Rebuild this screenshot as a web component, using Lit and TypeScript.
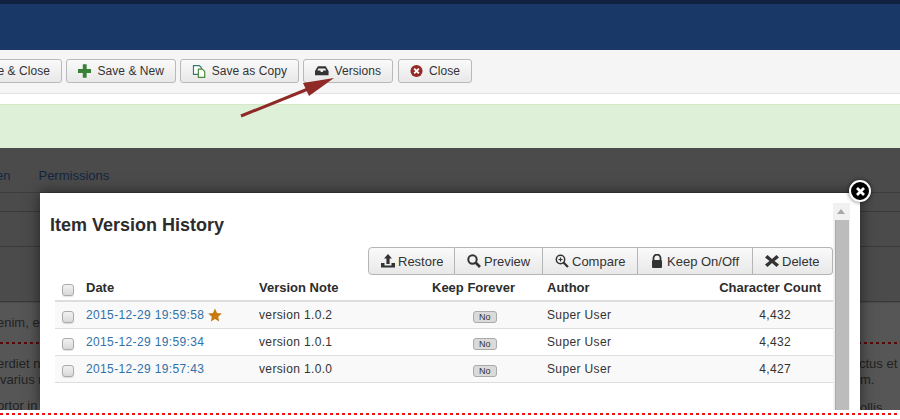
import { LitElement, html, css, svg } from "lit";
import { customElement } from "lit/decorators.js";

const rows = [
  { d: "2015-12-29 19:59:58", n: "version 1.0.2", c: "4,432", star: true },
  { d: "2015-12-29 19:59:34", n: "version 1.0.1", c: "4,432", star: false },
  { d: "2015-12-29 19:57:43", n: "version 1.0.0", c: "4,427", star: false },
];

const ic = {
  plus: svg`<path d="M5 0h4v5h5v4H9v5H5V9H0V5h5z" fill="#378137"/>`,
  copy: svg`<path d="M1.500 1.500h6l2 2v7h-8z" fill="#fff" stroke="#2f7d6b" stroke-width="1.200"/><path d="M6.500 5h4l2.500 2.500v6H6.500z" fill="#fff" stroke="#4a8a3a" stroke-width="1.200"/>`,
  versions: svg`<path d="M3 2h8l3 5v4.500H0V7z" fill="#333"/><path d="M3.500 4.500h7l1 2h-3L8 8H6L5.500 6.500h-3z" fill="#f0f0f0"/>`,
  close: svg`<circle cx="7" cy="7" r="6.500" fill="#942a25"/><path d="M4.500 4.500l5 5m0-5l-5 5" stroke="#fff" stroke-width="2"/>`,
  restore: svg`<path d="M7 0l4 4.500H8.600V10H5.400V4.500H3z" fill="#333"/><path d="M0 9h3.500v2.500h7V9H14v4.500H0z" fill="#333"/>`,
  search: svg`<circle cx="5.500" cy="5.500" r="4.200" fill="none" stroke="#333" stroke-width="2"/><path d="M8.500 8.500l4.500 4.500" stroke="#333" stroke-width="2.600"/>`,
  zoom: svg`<circle cx="5.500" cy="5.500" r="4.200" fill="none" stroke="#333" stroke-width="1.500"/><path d="M8.500 8.500l4.500 4.500" stroke="#333" stroke-width="2.200"/><path d="M3.500 5.500h4M5.500 3.500v4" stroke="#333" stroke-width="1.200"/>`,
  lock: svg`<path d="M3.500 6V4a3.500 3.500 0 0 1 7 0v2" fill="none" stroke="#333" stroke-width="1.800"/><rect x="2" y="6" width="10" height="8" rx="1" fill="#333"/>`,
  del: svg`<path d="M2.500 1L7 5 11.500 1 14 3.500 9.500 7 14 10.500 11.500 13 7 9 2.500 13 0 10.500 4.500 7 0 3.500z" fill="#333"/>`,
};

const icon = (p: unknown) => html`<svg class="ic" viewBox="0 0 14 14" width="14" height="14">${p}</svg>`;

@customElement("app-root")
export class AppRoot extends LitElement {
  static styles = css`
    :host { display: block; width: 900px; height: 419px; overflow: hidden; position: relative; background: #fff;
      font-family: "Liberation Sans", Arial, sans-serif; font-size: 12px; color: #333; }
    .top { height: 46px; background: #1a3867; border-top: 4px solid #10223f; }
    .toolbar { background: #f5f5f5; border-bottom: 1px solid #e3e3e3; display: flex; gap: 4px;
      padding: 9px 428px 0 0; height: 34px; justify-content: flex-end; }
    .tb { height: 24px; box-sizing: border-box; border: 1px solid #b9b9b9; border-radius: 3px; display: flex; align-items: center;
      background: linear-gradient(#fafafa, #e8e8e8); color: #333; padding: 0 11px; gap: 6px; white-space: nowrap; letter-spacing: .05px; flex: none; }
    .tb.w1 { width: 110px; }
    .tb.w2 { width: 119px; }
    .tb.w3 { width: 90px; margin-right: 1px; }
    .tb.w4 { width: 74px; }
    .gap { height: 10px; }
    .green { height: 44px; background: #dff0d8; border-top: 1px solid #d6e9c6; box-sizing: border-box; }
    .back { height: 262px; background: linear-gradient(#4b4b4b 0 155px, #565656 155px); color: #222; position: relative; font-size: 13px; overflow: hidden; }
    .tabs { height: 45px; border-bottom: 1px solid #3d3d3d; display: flex; gap: 28px; align-items: center; font-size: 13px; margin-left: -4px; color: #14263f; box-sizing: border-box; padding-top: 10px; }
    .rule { height: 18px; border-bottom: 1px solid #3a3a3a; }
    .rule.b { height: 34px; }
    .rule.c { height: 54px; }
    .bl { position: absolute; white-space: nowrap; }
    .dots { position: absolute; height: 2px; left: 0; width: 900px; top: 194px;
      background: repeating-linear-gradient(90deg, #5a0707 0 3px, transparent 3px 6px); }
    .foot { height: 9px; padding-top: 3px; background: #fff; }
    .redline { height: 2px; background: repeating-linear-gradient(90deg, #ee1111 0 3px, transparent 3px 6px); }
    .modal { position: absolute; left: 40px; top: 45px; width: 820px; height: 217px; background: #fff; box-shadow: 0 0 14px rgba(0,0,0,.55); color: #333; font-size: 12px; }
    .inner { padding: 0 27px 0 15px; }
    h3 { margin: 0 0 0 -5px; padding: 21px 0 0; font-size: 18px; line-height: 22px; font-weight: bold; color: #2c2c2c; height: 33px; }
    .actions { display: flex; justify-content: flex-end; height: 27px; }
    .ab { box-sizing: border-box; height: 28px; display: flex; align-items: center; gap: 3px; padding-left: 12px; border: 1px solid #b5b5b5; border-left: 0;
      background: linear-gradient(#fafafa, #e8e8e8); font-size: 13px; color: #333; white-space: nowrap; flex: none; }
    .ab:first-child { border-left: 1px solid #b5b5b5; border-radius: 4px 0 0 4px; }
    .ab:last-child { border-radius: 0 4px 4px 0; }
    .ab:nth-child(1) { width: 87px; }
    .ab:nth-child(2) { width: 88px; }
    .ab:nth-child(3) { width: 95px; }
    .ab:nth-child(4) { width: 115px; }
    .ab:nth-child(5) { width: 80px; }
    .grid { display: grid; grid-template-columns: 31px 173px 173px 115px 140px 1fr; width: 778px; }
    .cell { display: flex; align-items: center; height: 27px; box-sizing: border-box; border-bottom: 1px solid #ddd; white-space: nowrap; color: #333; letter-spacing: .36px; }
    .cell.h { font-weight: bold; font-size: 13px; height: 28px; border-bottom: 2px solid #ddd; padding-top: 1px; letter-spacing: 0; color: #2c2c2c; }
    .alt { background: #f9f9f9; }
    .right { justify-content: flex-end; padding-right: 12px; }
    .num { justify-content: flex-end; padding-right: 42px; }
    .ck { width: 12px; height: 12px; box-sizing: border-box; border: 1px solid #aaa; border-radius: 3px; background: linear-gradient(#f2f2f2,#d8d8d8); margin: 4px 0 0 7px; box-shadow: 0 1px 1px rgba(0,0,0,.12); }
    a { color: #3071a9; text-decoration: none; }
    .star { margin-left: 4px; }
    .badge { font-size: 9px; line-height: 10px; padding: 0 5px; background: #dadada; border: 1px solid #aaa; border-radius: 3px; color: #333; margin: 3px 0 0 41px; letter-spacing: 0; }
    .sb { position: absolute; left: 793px; top: 10px; width: 17px; bottom: 0; background: #f1f1f1; }
    .thumb { position: absolute; left: 2px; top: 17px; right: 1px; bottom: 0; background: #bcbcbc; border-left: 1px solid #aaa; }
    .up { position: absolute; left: 4px; top: 6px; border: 4px solid transparent; border-top: 0; border-bottom: 5px solid #a8a8a8; }
    .x { position: absolute; left: 849px; top: 32px; width: 22px; height: 22px; box-sizing: border-box; border: 2px solid #fff; border-radius: 50%; background: #000; box-shadow: 0 0 4px rgba(0,0,0,.6); display: flex; align-items: center; justify-content: center; }
    .arrow { position: absolute; left: 0; top: 0; pointer-events: none; }
  `;

  render() {
    return html`
      <div class="top"></div>
      <div class="toolbar">
        <div class="tb">Save &amp; Close</div>
        <div class="tb w1">${icon(ic.plus)}Save &amp; New</div>
        <div class="tb w2">${icon(ic.copy)}Save as Copy</div>
        <div class="tb w3">${icon(ic.versions)}Versions</div>
        <div class="tb w4">${icon(ic.close)}Close</div>
      </div>
      <div class="gap"></div>
      <div class="green"></div>
      <div class="back">
        <div class="tabs"><span>en</span><span>Permissions</span></div>
        <div class="rule"></div><div class="rule b"></div><div class="rule c"></div>
        <span class="bl" style="left:-3px;top:167px">enim, eu</span>
        <div class="dots"></div>
        <span class="bl" style="left:-3px;top:208px">erdiet no</span>
        <span class="bl" style="left:0;top:224px">varius r</span>
        <span class="bl" style="left:-3px;top:250px">ortor in e</span>
        <span class="bl" style="left:859px;top:208px">ctus et</span>
        <span class="bl" style="left:860px;top:224px">m.</span>
        <span class="bl" style="left:860px;top:252px">ollis.</span>
        <div class="modal">
          <div class="inner">
            <h3>Item Version History</h3>
            <div class="actions">
              <div class="ab">${icon(ic.restore)}Restore</div>
              <div class="ab">${icon(ic.search)}Preview</div>
              <div class="ab">${icon(ic.zoom)}Compare</div>
              <div class="ab">${icon(ic.lock)}Keep On/Off</div>
              <div class="ab">${icon(ic.del)}Delete</div>
            </div>
            <div class="grid">
              <div class="cell h"><span class="ck"></span></div>
              <div class="cell h">Date</div>
              <div class="cell h">Version Note</div>
              <div class="cell h">Keep Forever</div>
              <div class="cell h">Author</div>
              <div class="cell h right">Character Count</div>
              ${rows.map((r, i) => {
                const cls = i % 2 === 0 ? "cell alt" : "cell";
                return html`
                  <div class=${cls}><span class="ck"></span></div>
                  <div class=${cls}><a>${r.d}</a>${r.star
                    ? html`<svg class="star" width="14" height="14" viewBox="0 0 14 14"><path d="M7 .5l2 4.500 4.800.5-3.600 3.200 1 4.800L7 11l-4.200 2.500 1-4.800L.2 5.500 5 5z" fill="#c77a10"/></svg>`
                    : ""}</div>
                  <div class=${cls}>${r.n}</div>
                  <div class=${cls}><span class="badge">No</span></div>
                  <div class=${cls}>Super User</div>
                  <div class="${cls} num">${r.c}</div>`;
              })}
            </div>
          </div>
          <div class="sb"><div class="up"></div><div class="thumb"></div></div>
        </div>
        <div class="x"><svg width="11" height="11" viewBox="0 0 11 11"><path d="M2 2l7 7m0-7l-7 7" stroke="#fff" stroke-width="2.800"/></svg></div>
      </div>
      <div class="foot"><div class="redline"></div></div>
      <svg class="arrow" width="900" height="419"><path d="M241 116L308 89" stroke="#8f2a27" stroke-width="3"/><path d="M334 78L303 83 309 96z" fill="#8f2a27"/></svg>
    `;
  }
}
